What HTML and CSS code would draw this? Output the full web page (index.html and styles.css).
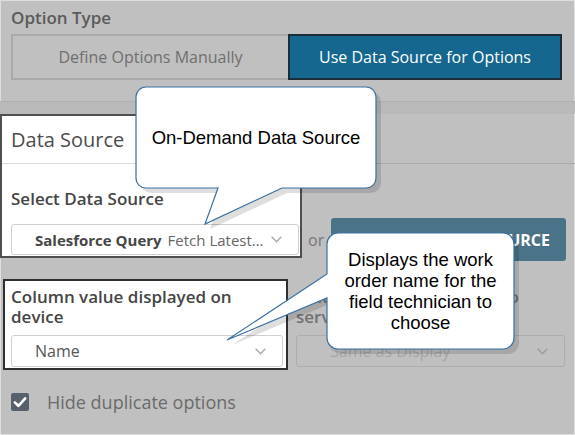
FILE: index.html
```html
<!DOCTYPE html>
<html>
<head>
<meta charset="utf-8">
<link rel="stylesheet" href="styles.css">
</head>
<body>
<div class="page">
  <section class="top">
    <div class="title">Option Type</div>
    <div class="toggle">
      <div class="opt">Define Options Manually</div>
      <div class="opt active">Use Data Source for Options</div>
    </div>
  </section>
  <div class="band"></div>

  <div class="ds-row">
    <div class="hl hl1">
      <div class="ds-head">Data Source</div>
      <div class="field">
        <div class="label">Select Data Source</div>
        <div class="select">
          <span class="sel-strong">Salesforce Query</span>
          <span class="sel-value">Fetch Latest Work Orders</span>
          <svg class="chev" width="11" height="7" viewBox="0 0 11 7"><polyline points="0.7,0.8 5.5,5.8 10.3,0.8" fill="none" stroke="#a9a9a9" stroke-width="1.4"/></svg>
        </div>
      </div>
    </div>
    <div class="ds-right">
      <div class="ds-right-head"></div>
      <div class="create-row">
        <span class="or">or</span>
        <div class="create-btn">CREATE DATA SOURCE</div>
      </div>
    </div>
  </div>

  <div class="col-row">
    <div class="hl hl2">
      <div class="label two">Column value displayed on device</div>
      <div class="select">
        <span class="sel-value dark">Name</span>
        <svg class="chev" width="11" height="7" viewBox="0 0 11 7"><polyline points="0.7,0.8 5.5,5.8 10.3,0.8" fill="none" stroke="#a9a9a9" stroke-width="1.4"/></svg>
      </div>
    </div>
    <div class="col-right">
      <div class="label two dim">Column value submitted to server</div>
      <div class="select dim-select">
        <span class="sel-value placeholder">Same as Display</span>
        <svg class="chev" width="11" height="7" viewBox="0 0 11 7"><polyline points="0.7,0.8 5.5,5.8 10.3,0.8" fill="none" stroke="#9d9d9d" stroke-width="1.4"/></svg>
      </div>
    </div>
  </div>

  <div class="check-row">
    <span class="checkbox">
      <svg width="18" height="18" viewBox="0 0 18 18"><polyline points="3.8,9.4 7.4,12.8 14.2,5.4" fill="none" stroke="#ffffff" stroke-width="2.6" stroke-linecap="round" stroke-linejoin="round"/></svg>
    </span>
    <span class="check-label">Hide duplicate options</span>
  </div>

  <div class="callouts">
    <svg class="callout-svg" width="575" height="435" viewBox="0 0 575 435">
      <path class="shadow" transform="translate(5,5)" d="M146,87 H366 A10,10 0 0 1 376,97 V178 A10,10 0 0 1 366,188 H282 L205,224 L218,188 H146 A10,10 0 0 1 136,178 V97 A10,10 0 0 1 146,87 Z"/>
      <path class="bubble" d="M146,87 H366 A10,10 0 0 1 376,97 V178 A10,10 0 0 1 366,188 H282 L205,224 L218,188 H146 A10,10 0 0 1 136,178 V97 A10,10 0 0 1 146,87 Z"/>
      <path class="shadow" transform="translate(5,5)" d="M338,233 H503 A11,11 0 0 1 514,244 V338 A11,11 0 0 1 503,349 H338 A11,11 0 0 1 327,338 V298 L227,340 L327,274 V244 A11,11 0 0 1 338,233 Z"/>
      <path class="bubble" d="M338,233 H503 A11,11 0 0 1 514,244 V338 A11,11 0 0 1 503,349 H338 A11,11 0 0 1 327,338 V298 L227,340 L327,274 V244 A11,11 0 0 1 338,233 Z"/>
    </svg>
    <div class="callout-text c1">On-Demand Data Source</div>
    <div class="callout-text c2">Displays the work order name for the field technician to choose</div>
  </div>
</div>
</body>
</html>
```

FILE: styles.css
```css
* { box-sizing: border-box; }

html, body {
  margin: 0;
  padding: 0;
}

body {
  font-family: "Open Sans", "DejaVu Sans", sans-serif;
  background: #c0c0c0;
}

.page {
  position: relative;
  width: 575px;
  height: 435px;
  overflow: hidden;
  background: #c0c0c0;
  box-shadow: inset 0 0 0 1px #dedede;
}

/* ---------- option type ---------- */
.top {
  height: 101px;
  padding: 8px 13px 0 11px;
}

.title {
  font-size: 17px;
  line-height: 20px;
  font-weight: 600;
  color: #5b5b5b;
  margin-bottom: 6px;
}

.toggle {
  display: flex;
  width: 551px;
  height: 46px;
}

.opt {
  flex: 0 0 277px;
  display: flex;
  align-items: center;
  justify-content: center;
  border: 2px solid #a9a9a9;
  border-right: none;
  font-size: 16px;
  color: #6f6f6f;
}

.opt.active {
  flex: 1;
  background: #15678f;
  border: 2px solid #1c2d39;
  color: #ffffff;
}

.band {
  height: 13px;
  background: #b9b9b9;
  border-top: 1px solid #b0b0b0;
}

/* ---------- data source ---------- */
.ds-row {
  display: flex;
  align-items: flex-start;
}

.hl {
  background: #ffffff;
}

.hl1 {
  width: 302px;
  border: 2px solid #4f4f4f;
}

.ds-head {
  height: 48px;
  display: flex;
  align-items: center;
  padding-left: 9px;
  border-bottom: 1px solid #dadada;
  font-size: 20px;
  color: #4c4c4c;
}

.field {
  padding: 25px 1px 1px 9px;
}

.label {
  font-size: 17px;
  line-height: 20px;
  font-weight: 600;
  color: #454545;
  margin-bottom: 15px;
}

.label.two {
  margin-bottom: 8px;
}

.label.dim {
  color: #707070;
}

.select {
  display: flex;
  align-items: center;
  height: 31px;
  padding: 0 16px 0 23px;
  border: 1px solid #cfcfcf;
  border-radius: 3px;
  background: #ffffff;
  font-size: 15px;
  white-space: nowrap;
}

.sel-strong {
  font-weight: 700;
  color: #464646;
  margin-right: 6px;
}

.sel-value {
  flex: 1;
  min-width: 0;
  overflow: hidden;
  text-overflow: ellipsis;
  color: #666666;
}

.sel-value.dark {
  font-size: 16px;
  color: #555555;
}

.chev {
  flex: none;
  margin-left: 6px;
}

.ds-right {
  flex: 1;
}

.ds-right-head {
  height: 50px;
  border-bottom: 1px solid #ababab;
}

.create-row {
  display: flex;
  align-items: center;
  padding-top: 54px;
}

.or {
  margin-left: 6px;
  width: 23px;
  font-size: 16px;
  color: #777777;
}

.create-btn {
  width: 235px;
  height: 43px;
  display: flex;
  align-items: center;
  justify-content: flex-end;
  padding-right: 16px;
  background: #4a7388;
  border-radius: 3px;
  color: #ffffff;
  font-size: 16px;
  font-weight: 700;
}

/* ---------- column values ---------- */
.col-row {
  display: flex;
  align-items: flex-start;
  margin-top: 18px;
}

.hl2 {
  width: 285px;
  margin-left: 3px;
  border: 2px solid #2f2f2f;
  padding: 6px 3px 1px 6px;
}

.hl2 .select {
  height: 32px;
}

.col-right {
  width: 269px;
  margin-left: 8px;
  padding-top: 8px;
}

.dim-select {
  height: 32px;
  background: transparent;
  border-color: #adadad;
  padding-left: 33px;
}

.placeholder {
  font-size: 16px;
  color: #a6a6a6;
}

/* ---------- checkbox ---------- */
.check-row {
  display: flex;
  align-items: center;
  margin-top: 20px;
  padding-left: 11px;
}

.checkbox {
  width: 18px;
  height: 18px;
  border-radius: 2px;
  background: #56616b;
  display: flex;
}

.check-label {
  margin-left: 18px;
  font-size: 18px;
  color: #6b6b6b;
}

/* ---------- callouts ---------- */
.callouts {
  position: absolute;
  left: 0;
  top: 0;
  width: 575px;
  height: 435px;
  pointer-events: none;
}

.callout-svg {
  position: absolute;
  left: 0;
  top: 0;
}

.shadow {
  fill: rgba(0, 0, 0, 0.13);
}

.bubble {
  fill: #ffffff;
  stroke: #3b70a3;
  stroke-width: 1.2;
}

.callout-text {
  position: absolute;
  display: flex;
  align-items: center;
  justify-content: center;
  text-align: center;
  font-family: "Liberation Sans", Arial, sans-serif;
  font-size: 18.5px;
  color: #000000;
}

.c1 {
  left: 136px;
  top: 87px;
  width: 240px;
  height: 101px;
}

.c2 {
  left: 327px;
  top: 233px;
  width: 187px;
  height: 116px;
  padding: 0 12px;
  line-height: 21px;
}
```
